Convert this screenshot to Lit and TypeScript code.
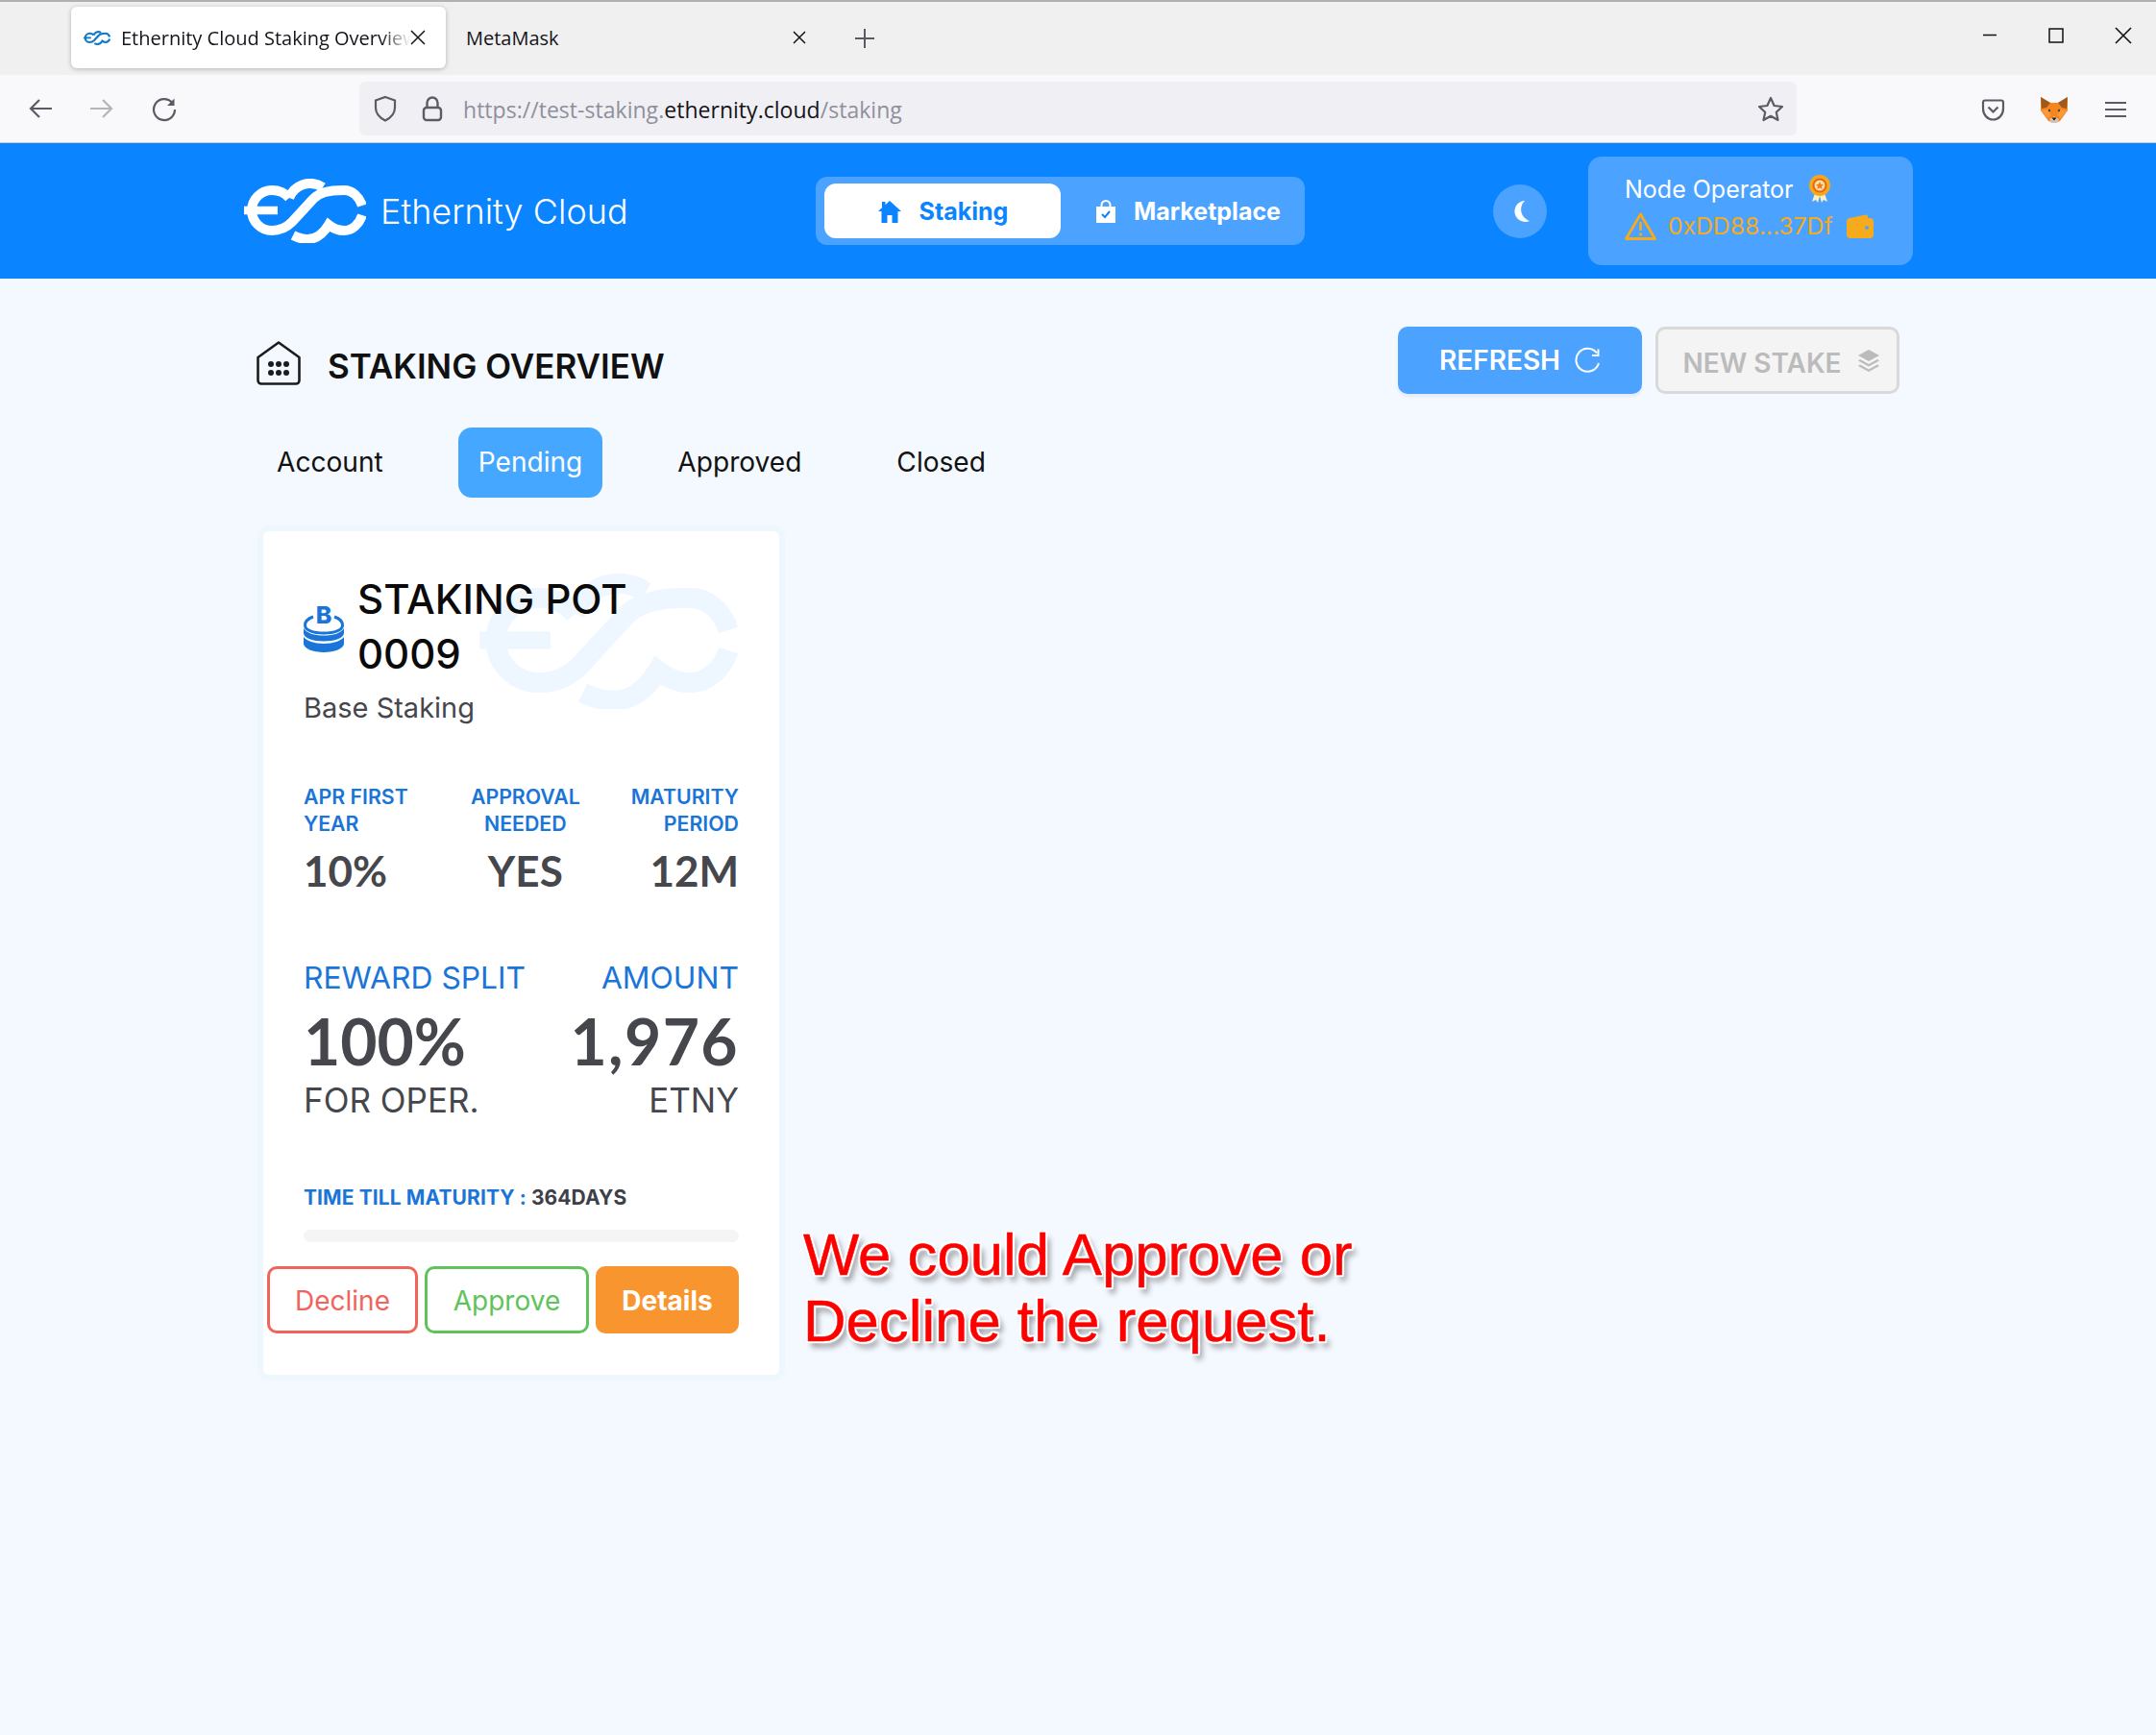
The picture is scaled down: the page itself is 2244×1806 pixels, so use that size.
import { LitElement, html, css, svg } from "lit";
import { customElement } from "lit/decorators.js";

const logo = (w: number, h: number, color: string, sw = 10) => html`<svg class="logo" width=${w} height=${h} viewBox="8 6 127 67" fill="none" stroke=${color} stroke-width=${sw}>
  <path d="M8 39H43" stroke-width="8.5"/>
  <path d="M55 26C50 20 43 18 37 18C25 18 16 28 16 39C16 51 26 60 37 60C46 60 52 57 58 51L80 27C86 21 94 18 112 18C121 18 128 25 131 34"/>
  <path d="M55 26C60 13 76 6 90 15"/>
  <path d="M131 44C128 53 121 60 112 60C106 60 101 58 96 54C90 64 82 69 74 69C68 69 63 67 59 65"/>
</svg>`;

const ic = (w: number, h: number, vb: string, body: unknown) =>
  html`<svg width=${w} height=${h} viewBox=${vb} fill="none" style="flex:none">${body}</svg>`;

@customElement("app-root")
export class AppRoot extends LitElement {
  static styles = css`
    :host { display: block; width: 2244px; height: 1806px; position: relative; overflow: hidden; background: #f4f9ff; font-family: Inter, "Liberation Sans", sans-serif; }
    .tabbar { height: 76px; border-top: 2px solid #b0b0b0; background: #f0f0f1; display: flex; align-items: flex-start; padding-left: 74px; box-sizing: content-box; font-family: "Open Sans", sans-serif; font-size: 20px; color: #15141a; }
    .tab { width: 390px; height: 64px; margin-top: 5px; box-sizing: border-box; display: flex; align-items: center; border-radius: 6px; }
    .tab.on { background: #fff; box-shadow: 0 1px 5px rgba(0,0,0,.25); padding-left: 13px; }
    .tab.on .title { margin-left: 11px; width: 301px; white-space: nowrap; overflow: hidden; -webkit-mask-image: linear-gradient(90deg,#000 90%,transparent); mask-image: linear-gradient(90deg,#000 90%,transparent); }
    .tab.off { padding-left: 21px; width: 376px; justify-content: space-between; padding-right: 0; }
    .plus { margin: 27px 0 0 49px; }
    .wctl { margin-left: auto; display: flex; gap: 53px; align-items: center; padding: 26px 25px 0 0; }
    .toolbar { height: 70px; background: #f9f9fb; border-bottom: 1px solid #ccc; display: flex; align-items: center; position: relative; }
    .nav { display: flex; gap: 40px; padding: 2px 0 0 30px; width: 374px; box-sizing: border-box; }
    .url { width: 1496px; height: 56px; background: #f0f0f4; border-radius: 6px; display: flex; align-items: center; box-sizing: border-box; padding-left: 15px; font-family: "Open Sans", sans-serif; font-size: 23px; color: #8f8f9d; }
    .url b { font-weight: 400; color: #15141a; }
    .url .gap { width: 26px; }
    .url .t { margin-left: 21px; padding-top: 2px; letter-spacing: .03px; }
    .url .star { margin-left: auto; margin-right: 13px; padding-top: 1px; display: flex; }
    .tools { display: flex; align-items: center; gap: 37px; margin-left: 192px; padding-top: 2px; }
    .menu { margin-left: 2px; display: flex; }
    .hdr { height: 141px; background: #0a84ff; display: flex; align-items: center; padding-left: 254px; color: #fff; }
    .brand { font-size: 36px; margin-left: 15px; width: 453px; font-weight: 300; white-space: nowrap; }
    .pill { width: 509px; height: 71px; background: #4ba3ff; border-radius: 12px; display: flex; align-items: center; padding-left: 9px; box-sizing: border-box; font-size: 25px; font-weight: 700; }
    .pill > div { display: flex; align-items: center; justify-content: center; gap: 18px; padding-top: 1px; box-sizing: border-box; }
    .pill .a { width: 246px; height: 57px; background: #fff; color: #0a84ff; border-radius: 12px; }
    .pill .b { width: 236px; padding-left: 29px; }
    .moon { width: 56px; height: 56px; border-radius: 50%; background: #4ba3ff; margin-left: 196px; display: flex; align-items: center; justify-content: center; }
    .node { width: 338px; height: 113px; background: #4ba3ff; border-radius: 14px; margin-left: 43px; box-sizing: border-box; padding: 17px 0 0 38px; font-size: 25px; }
    .node .l { display: flex; align-items: center; height: 34px; }
    .node .l + .l { margin-top: 4px; color: #f5ab1c; font-size: 24.7px; }
    .s15 { width: 15px; } .s12 { width: 12px; } .s14 { width: 14px; }
    main { padding-left: 267px; }
    .head { display: flex; align-items: flex-start; height: 155px; padding-top: 50px; box-sizing: border-box; }
    .head svg.home { margin-top: 15px; }
    h1 { margin: 14px 0 0 28px; font-size: 35px; line-height: 54px; font-weight: 600; color: #111; width: 1114px; }
    .btn { width: 254px; height: 70px; box-sizing: border-box; border-radius: 10px; display: flex; align-items: center; justify-content: center; gap: 14px; font-size: 28px; font-weight: 600; white-space: nowrap; }
    .btn.p { background: #4ba3ff; color: #fff; box-shadow: 0 3px 3px rgba(75,120,190,.1); }
    .btn.d { background: #f4f4f4; border: 3px solid #d9d9d9; color: #bbb; margin-left: 14px; padding: 6px 0 0 8px; gap: 16px; }
    .btn.d span { display: flex; margin-top: -6px; }
    .tabs { display: flex; gap: 57px; height: 73px; }
    .tabs div { padding: 0 21px 2px; display: flex; align-items: center; font-size: 28.1px; color: #111; border-radius: 14px; }
    .tabs .on { background: #45a7ff; color: #fff; }
    .card { margin: 35px 0 0 7px; width: 537px; height: 878px; box-sizing: border-box; background: #fff; border-radius: 6px; box-shadow: 0 0 0 6px #eef6fe; padding: 42px 42px 0; position: relative; }
    .wm { position: absolute; left: 223px; top: 44px; }
    .card > *:not(.wm) { position: relative; }
    .ttl { display: flex; align-items: center; gap: 14px; font-size: 42px; line-height: 57px; font-weight: 500; color: #0a0a0a; }
    .sub { font-size: 29px; line-height: 40px; margin-top: 8px; color: #45474d; }
    .stats { display: flex; justify-content: space-between; margin-top: 58px; }
    .stats > div:nth-child(1) { min-width: 121px; }
    .stats > div:nth-child(2) { text-align: center; }
    .stats > div:nth-child(3) { text-align: right; }
    .lbl { font-size: 21.3px; line-height: 28px; font-weight: 600; color: #1a75d8; }
    .val { font-family: Lato, sans-serif; font-size: 44px; line-height: 50px; margin-top: 10px; font-weight: 700; color: #45474d; }
    .two { display: flex; justify-content: space-between; margin-top: 65px; }
    .two > div:nth-child(2) { text-align: right; }
    .two > div:nth-child(2) .big { letter-spacing: 1.4px; }
    .big-l { font-size: 31.8px; line-height: 40px; padding-top: 2px; color: #1a75d8; }
    .big { font-family: Lato, sans-serif; font-size: 66px; line-height: 70px; margin-top: 11px; font-weight: 700; color: #45474d; }
    .unit { font-size: 35px; line-height: 40px; margin-top: 6px; color: #45474d; }
    .time { font-size: 21px; line-height: 30px; margin-top: 67px; font-weight: 700; color: #1a75d8; letter-spacing: .1px; }
    .time span { color: #3d4048; }
    .bar { height: 13px; background: #f5f5f5; border-radius: 7px; margin-top: 18px; }
    .acts { display: flex; margin: 25px 0 0 -38px; gap: 7px; }
    .acts div { height: 70px; box-sizing: border-box; border-radius: 10px; display: flex; align-items: center; justify-content: center; font-size: 28px; padding-top: 2px; }
    .dec { width: 157px; border: 3px solid #f0645c; color: #f0645c; }
    .app { width: 171px; border: 3px solid #60c25a; color: #60c25a; }
    .det { width: 149px; background: #f9952e; color: #fff; font-weight: 700; }
    .note { position: absolute; left: 836px; top: 1272px; font-family: "Liberation Sans", sans-serif; font-size: 61.7px; line-height: 68.5px; color: #f00; white-space: nowrap; -webkit-text-stroke: .5px #f00; text-shadow: 2px 0 1px #fff, -2px 0 1px #fff, 0 2px 1px #fff, 0 -2px 1px #fff, 2px 2px 1px #fff, -2px 2px 1px #fff, 2px -2px 1px #fff, -2px -2px 1px #fff, 4px 6px 6px rgba(0,0,0,.45); }
  `;

  render() {
    const dark = "#5b5b66";
    return html`
      <div class="tabbar">
        <div class="tab on">
          ${logo(28, 15, "#1179c8", 10)}
          <span class="title">Ethernity Cloud Staking Overview</span>
          ${ic(16, 16, "0 0 16 16", svg`<path d="M1 1L15 15M15 1L1 15" stroke="#15141a" stroke-width="1.5"/>`)}
        </div>
        <div class="tab off">
          <span>MetaMask</span>
          ${ic(16, 16, "0 0 16 16", svg`<path d="M2 2L14 14M14 2L2 14" stroke="#15141a" stroke-width="1.5"/>`)}
        </div>
        ${html`<div class="plus">${ic(22, 22, "0 0 22 22", svg`<path d="M11 1V21M1 11H21" stroke="${dark}" stroke-width="2"/>`)}</div>`}
        <div class="wctl">
          ${ic(16, 16, "0 0 16 16", svg`<path d="M1 7.5H15" stroke="#111" stroke-width="1.5"/>`)}
          ${ic(16, 16, "0 0 16 16", svg`<rect x="1" y="1" width="14" height="14" stroke="#111" stroke-width="1.5"/>`)}
          ${ic(18, 18, "0 0 18 18", svg`<path d="M1 1L17 17M17 1L1 17" stroke="#111" stroke-width="1.6"/>`)}
        </div>
      </div>
      <div class="toolbar">
        <div class="nav">
          ${ic(24, 24, "0 0 24 24", svg`<path d="M24 12H2M11 3L2 12L11 21" stroke="${dark}" stroke-width="2.2"/>`)}
          ${ic(24, 24, "0 0 24 24", svg`<path d="M0 12H22M13 3L22 12L13 21" stroke="#b4b4bb" stroke-width="2.2"/>`)}
          ${ic(26, 26, "0 0 26 26", svg`<path d="M21 5.5A11 11 0 1 0 24 13" stroke="${dark}" stroke-width="2.2"/><path d="M23.5 1.5V9H16" fill="${dark}"/>`)}
        </div>
        <div class="url">
          ${ic(24, 28, "0 0 24 28", svg`<path d="M12 2L22 5.5V13C22 20 17 24 12 26.5C7 24 2 20 2 13V5.5Z" stroke="${dark}" stroke-width="2.2"/>`)}
          <span class="gap"></span>
          ${ic(22, 28, "0 0 22 28", svg`<path d="M5.5 13V8A5.5 5.5 0 0 1 16.500 8V13" stroke="${dark}" stroke-width="2.4"/><rect x="2" y="13" width="18" height="13" rx="3" stroke="${dark}" stroke-width="2.4"/>`)}
          <span class="t">https://test-staking.<b>ethernity.cloud</b>/staking</span>
          <span class="star">${ic(28, 27, "0 0 28 27", svg`<path d="M14 2L17.600 10L26 11L19.800 16.800L21.500 25L14 20.800L6.500 25L8.200 16.800L2 11L10.400 10Z" stroke="${dark}" stroke-width="2.2" stroke-linejoin="round"/>`)}</span>
        </div>
        <div class="tools">
          ${ic(25, 23, "0 0 25 23", svg`<path d="M2 3.500A2.200 2.200 0 0 1 4 1.500H21A2.200 2.200 0 0 1 23 3.500V10C23 17 18 21.500 12.500 21.500C7 21.500 2 17 2 10Z" stroke="${dark}" stroke-width="2.2"/><path d="M7.500 8.500L12.500 13.500L17.500 8.500" stroke="${dark}" stroke-width="2.2"/>`)}
          ${ic(28, 27, "0 0 28 27", svg`<path d="M0 0L10 6H18L28 0L28 14L20 25L14 27L8 25L0 14Z" fill="#f6851b"/><path d="M0 0L10 6L6 11L1 12Z" fill="#9c5a20"/><path d="M28 0L18 6L22 11L27 12Z" fill="#9c5a20"/><path d="M1 14L7 13L11 19L7 22Z" fill="#fb9a3c"/><path d="M27 14L21 13L17 19L21 22Z" fill="#fb9a3c"/><path d="M9 23L14 20L19 23L17 27H11Z" fill="#d7c1b3"/><path d="M11.500 21.500H16.500L14 24.500Z" fill="#161616"/><circle cx="9" cy="14" r="1.200" fill="#444"/><circle cx="19" cy="14" r="1.200" fill="#444"/>`)}
          <span class="menu">${ic(22, 20, "0 0 22 20", svg`<path d="M0 3H22M0 10H22M0 17H22" stroke="${dark}" stroke-width="2.200"/>`)}</span>
        </div>
      </div>
      <div class="hdr">
        ${logo(127, 67, "#fff")}
        <div class="brand">Ethernity Cloud</div>
        <div class="pill">
          <div class="a">
            ${ic(26, 24, "0 0 26 24", svg`<path d="M13 1L25 12H21.500V24H15.500V16H10.500V24H4.500V12H1L5 8.300V2H8.500V5.200Z" fill="#0a84ff"/>`)}
            Staking
          </div>
          <div class="b">
            ${ic(22, 24, "0 0 22 24", svg`<path d="M1 7H21V24H1Z" fill="#fff"/><path d="M6.500 7V5.500A4.500 4.500 0 0 1 15.500 5.500V7" stroke="#fff" stroke-width="2"/><path d="M7 15L10 18L15 12" stroke="#0a84ff" stroke-width="2"/>`)}
            Marketplace
          </div>
        </div>
        <div class="moon">
          ${ic(22, 24, "0 0 22 24", svg`<path d="M16 1A11 11 0 1 0 21 22A12.500 12.500 0 0 1 16 1Z" fill="#fff"/>`)}
        </div>
        <div class="node">
          <div class="l">Node Operator
            <span class="s15"></span>
            ${ic(24, 30, "0 0 24 30", svg`<path d="M7 19L4 28L8 26L10 29L12 22L14 29L16 26L20 28L17 19Z" fill="#fbeec2"/><circle cx="12" cy="11" r="11" fill="#f5a81c"/><circle cx="12" cy="11" r="7.500" fill="#e8650f"/><circle cx="12" cy="11" r="5.500" fill="#fde2a8"/><path d="M12 7L13.300 10H16L14 12L14.700 15L12 13.400L9.300 15L10 12L8 10H10.700Z" fill="#ef7d1a"/>`)}
          </div>
          <div class="l">
            ${ic(33, 29, "0 0 33 29", svg`<path d="M16.500 2L31.500 27.500H1.500Z" stroke="#f5ab1c" stroke-width="2.800" stroke-linejoin="round"/><path d="M16.500 10V19M16.500 21.500V24.500" stroke="#f5ab1c" stroke-width="2.600"/>`)}
            <span class="s12"></span>
            0xDD88...37Df
            <span class="s14"></span>
            ${ic(28, 25, "0 0 28 25", svg`<path d="M3 4L20 0.500Q22 0 22 3V5H4Z" fill="#f5ab1c"/><rect x="0" y="4" width="28" height="21" rx="4" fill="#f5ab1c"/><circle cx="21" cy="14" r="2" fill="#4ba3ff"/>`)}
          </div>
        </div>
      </div>
      <main>
        <div class="head">
          <svg class="home" width="46" height="46" viewBox="0 0 46 46" fill="none">
            <path d="M1.500 17L23 1.500L44.500 17V41A3.500 3.500 0 0 1 41 44.500H5A3.500 3.500 0 0 1 1.500 41Z" stroke="#1c1c1e" stroke-width="2.600" stroke-linejoin="round"/>
            ${[15, 23, 31].flatMap((x) => [24, 33].map((y) => svg`<circle cx=${x} cy=${y} r="3" fill="#1c1c1e"/>`))}
          </svg>
          <h1>STAKING OVERVIEW</h1>
          <div class="btn p">REFRESH
            ${ic(28, 28, "0 0 28 28", svg`<path d="M24 6.500A12 12 0 1 0 26 17" stroke="#fff" stroke-width="2"/><path d="M25.500 2.500V9H19" stroke="#fff" stroke-width="2"/>`)}
          </div>
          <div class="btn d">NEW STAKE
            <span>${ic(24, 24, "0 0 24 24", svg`<path d="M12 1L23 7L12 13L1 7Z" fill="#bbb"/><path d="M3 11L1 12.500L12 18.500L23 12.500L21 11L12 16Z" fill="#bbb"/><path d="M3 16.500L1 18L12 24L23 18L21 16.500L12 21.500Z" fill="#bbb"/>`)}</span>
          </div>
        </div>
        <div class="tabs">
          <div>Account</div><div class="on">Pending</div><div>Approved</div><div>Closed</div>
        </div>
        <div class="card">
          <div class="wm">${logo(272, 141, "#eef6ff")}</div>
          <div class="ttl">
            ${ic(42, 56, "0 -6 42 56", svg`
              <text x="21" y="19" text-anchor="middle" font-family="Inter" font-weight="800" font-size="25" fill="#1a75d8">B</text>
              <path d="M10 12C4 14 1.500 18 1.500 21C1.500 26 10 29 21 29C32 29 40.500 26 40.500 21C40.500 18 38 14 32 12" stroke="#1a75d8" stroke-width="3"/>
              <path d="M0 24C3 29 11 31.500 21 31.500C31 31.500 39 29 42 24V29C42 34 32 37.500 21 37.500C10 37.500 0 34 0 29Z" fill="#1a75d8"/>
              <path d="M0 33C3 37 11 40 21 40C31 40 39 37 42 33V40C42 45 32 49 21 49C10 49 0 45 0 40Z" fill="#1a75d8"/>
            `)}
            <div>STAKING POT<br />0009</div>
          </div>
          <div class="sub">Base Staking</div>
          <div class="stats">
            <div><div class="lbl">APR FIRST<br />YEAR</div><div class="val">10%</div></div>
            <div><div class="lbl">APPROVAL<br />NEEDED</div><div class="val">YES</div></div>
            <div><div class="lbl">MATURITY<br />PERIOD</div><div class="val">12M</div></div>
          </div>
          <div class="two">
            <div><div class="big-l">REWARD SPLIT</div><div class="big">100%</div><div class="unit">FOR OPER.</div></div>
            <div><div class="big-l">AMOUNT</div><div class="big">1,976</div><div class="unit">ETNY</div></div>
          </div>
          <div class="time">TIME TILL MATURITY : <span>364DAYS</span></div>
          <div class="bar"></div>
          <div class="acts">
            <div class="dec">Decline</div><div class="app">Approve</div><div class="det">Details</div>
          </div>
        </div>
      </main>
      <div class="note">We could Approve or<br />Decline the request.</div>
    `;
  }
}
